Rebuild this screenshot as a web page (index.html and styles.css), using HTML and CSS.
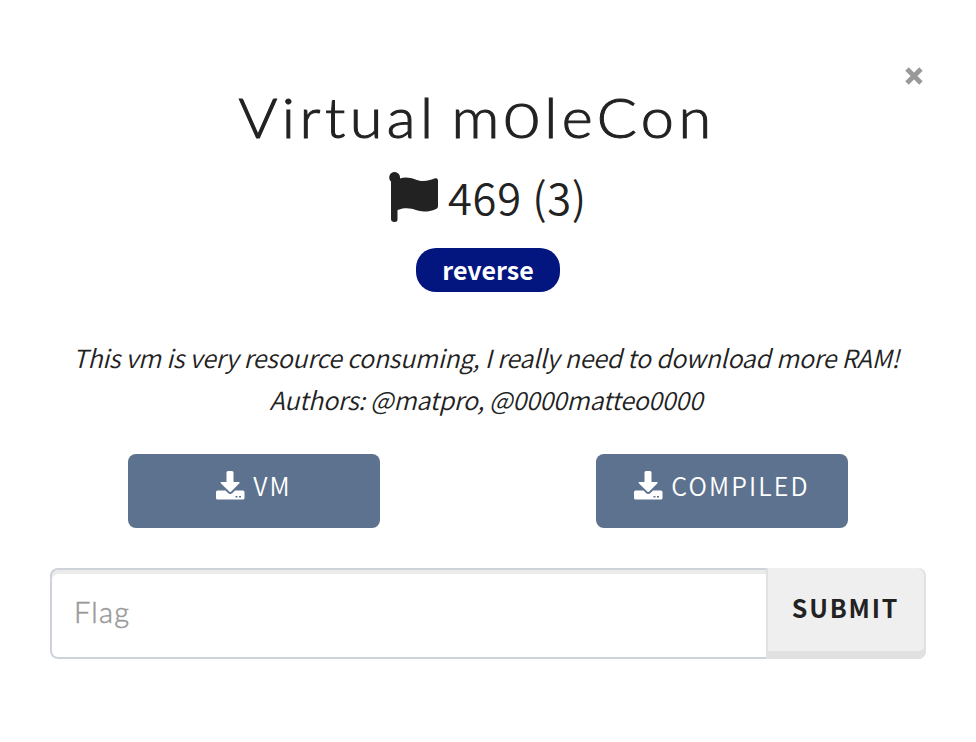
FILE: index.html
```html
<!DOCTYPE html>
<html lang="en">
<head>
<meta charset="utf-8">
<title>Virtual m0leCon</title>
<link rel="stylesheet" href="styles.css">
</head>
<body>
<main class="modal">
  <button class="close" aria-label="Close">
    <svg viewBox="0 0 18 18"><path d="M2 2 16 16M16 2 2 16"/></svg>
  </button>
  <h1 class="title">Virtual m<span class="zero">0</span>leCon</h1>
  <div class="score">
    <svg class="flag" viewBox="0 0 50 50"><path d="M5.500 0A5.500 5.500 0 0 1 10.900 6.600C20 3 27 9 34 9C39 9 43 7.500 46 6.300C48 5.700 49 7 49 8.500V34C49 35.500 48.500 36.200 47 37C43 39 39 39.600 35 39.600C27 39.600 22 33.500 8.500 38V47.500Q8.500 50 5.500 50Q2 50 2 47V9.500A5.500 5.500 0 0 1 5.500 0Z"/></svg>
    <span>469 (3)</span>
  </div>
  <span class="tag">reverse</span>
  <p class="description">
    <span class="line">This vm is very resource consuming, I really need to download more RAM!</span>
    <span class="line">Authors: @matpro, @0000matteo0000</span>
  </p>
  <div class="files">
    <a class="file"><svg class="download" viewBox="0 0 29 29"><path fill-rule="evenodd" d="M10.500 1.500Q10.500 0 12 0H16Q17.500 0 17.500 1.500V11H22.500Q24.500 11 23.200 12.400L15.200 20.500Q14.200 21.500 13.200 20.500L5 12.400Q3.700 11 5.700 11H10.500ZM1.500 19.500H9.500L12 22Q14.200 24.200 16.500 22L19 19.500H27Q28.500 19.500 28.500 21V27Q28.500 28.500 27 28.500H1.500Q0 28.500 0 27V21Q0 19.500 1.500 19.500ZM19.500 25H21.500V26.500H19.500ZM23 25H25V26.500H23Z"/></svg><span>VM</span></a>
    <a class="file"><svg class="download" viewBox="0 0 29 29"><path fill-rule="evenodd" d="M10.500 1.500Q10.500 0 12 0H16Q17.500 0 17.500 1.500V11H22.500Q24.500 11 23.200 12.400L15.200 20.500Q14.200 21.500 13.200 20.500L5 12.400Q3.700 11 5.700 11H10.500ZM1.500 19.500H9.500L12 22Q14.200 24.200 16.500 22L19 19.500H27Q28.500 19.500 28.500 21V27Q28.500 28.500 27 28.500H1.500Q0 28.500 0 27V21Q0 19.500 1.500 19.500ZM19.500 25H21.500V26.500H19.500ZM23 25H25V26.500H23Z"/></svg><span>COMPILED</span></a>
  </div>
  <form class="answer">
    <input class="field" type="text" placeholder="Flag">
    <button class="submit" type="button">SUBMIT</button>
  </form>
</main>
</body>
</html>
```
FILE: styles.css
```css
* { box-sizing: border-box; }
body {
  margin: 0;
  background: #fff;
  color: #222;
  font-family: "Noto Sans CJK SC", "Noto Sans", sans-serif;
  font-size: 25px;
}
.modal {
  position: relative;
  height: 742px;
  padding: 85px 50px 0;
  display: flex;
  flex-direction: column;
  align-items: center;
}
.close {
  position: absolute;
  top: 67px;
  right: 53px;
  width: 18px;
  height: 18px;
  padding: 0;
  border: 0;
  background: none;
}
.close svg { display: block; overflow: visible; fill: none; stroke: #999; stroke-width: 4.8; }
.title {
  height: 64px;
  margin: 0 0 18px;
  padding-right: 21px;
  font: 300 55px/64px Lato, sans-serif;
  letter-spacing: 4.1px;
  word-spacing: -6px;
  white-space: nowrap;
  -webkit-text-stroke: 1px #222;
  transform: scaleX(1.08);
}
.zero {
  display: inline-block;
  margin: 0 3px;
  font-size: 47px;
  line-height: 1;
  transform: scaleX(1.2);
}
.score {
  display: flex;
  align-items: center;
  gap: 9px;
  height: 60px;
  font-size: 43.5px;
  font-weight: 350;
  line-height: 60px;
  letter-spacing: 0.7px;
  white-space: nowrap;
}
.flag { width: 50px; height: 50px; fill: #222; }
.tag {
  width: 144px;
  height: 44px;
  margin-top: 21px;
  border-radius: 20px;
  background: #03157f;
  color: #fff;
  font-weight: 700;
  line-height: 42px;
  text-align: center;
}
.description {
  margin: 44px 0 34px;
  padding-right: 4px;
  font-style: italic;
  font-weight: 350;
  line-height: 42px;
  text-align: center;
  white-space: nowrap;
}
.line { display: block; letter-spacing: -0.2px; }
.files {
  display: flex;
  justify-content: space-between;
  width: 720px;
}
.file {
  display: flex;
  justify-content: center;
  gap: 8px;
  width: 252px;
  height: 74px;
  border-radius: 8px;
  background: #5d728e;
  color: #fff;
  font-weight: 350;
  letter-spacing: 2.1px;
  line-height: 62px;
}
.download { width: 29px; height: 29px; margin-top: 17px; fill: #fff; }
.answer {
  display: flex;
  width: 876px;
  height: 91px;
  margin: 40px 0 0;
}
.field {
  flex: 1;
  min-width: 0;
  padding: 0 22px 5px;
  border: 2px solid #ced2d9;
  border-right: 0;
  border-radius: 8px 0 0 8px;
  box-shadow: inset 0 4px 0 #ebebeb;
  font: 300 29px Lato, sans-serif;
  letter-spacing: 1.2px;
}
.field::placeholder { color: #999; opacity: 1; -webkit-text-stroke: 0.5px #999; }
.submit {
  width: 160px;
  padding: 0 1px 13px 0;
  border: 0;
  border-radius: 0 8px 8px 0;
  background: #efefef;
  box-shadow: inset 2px 0 0 #e1e1e1, inset -2px 0 0 #e1e1e1, inset 0 -8px 0 #e1e1e1;
  color: #222;
  font: 700 25px/78px "Noto Sans CJK SC", sans-serif;
  letter-spacing: 1.8px;
}
```
